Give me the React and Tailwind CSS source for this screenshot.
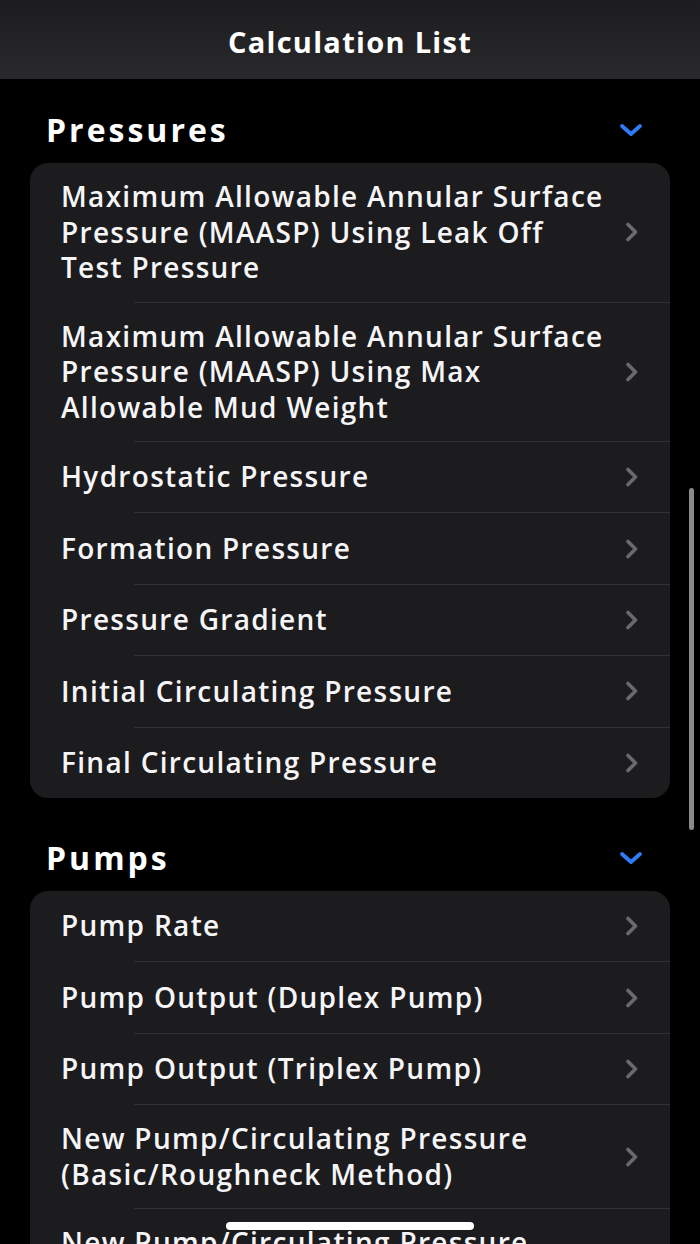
import { Fragment } from "react";

const SECTIONS = [
  {
    title: "Pressures",
    items: [
      "Maximum Allowable Annular Surface Pressure (MAASP) Using Leak Off Test Pressure",
      "Maximum Allowable Annular Surface Pressure (MAASP) Using Max Allowable Mud Weight",
      "Hydrostatic Pressure",
      "Formation Pressure",
      "Pressure Gradient",
      "Initial Circulating Pressure",
      "Final Circulating Pressure",
    ],
  },
  {
    title: "Pumps",
    items: [
      "Pump Rate",
      "Pump Output (Duplex Pump)",
      "Pump Output (Triplex Pump)",
      "New Pump/Circulating Pressure (Basic/Roughneck Method)",
      "New Pump/Circulating Pressure (Advanced Method)",
    ],
  },
];

const appFont = { fontFamily: '"Open Sans", "Liberation Sans", sans-serif' };

function ChevronRight() {
  return (
    <svg width="16" height="20" viewBox="0 0 16 20" className="shrink-0">
      <path
        d="M4 2.5 L11.5 10 L4 17.5"
        fill="none"
        stroke="#6a6a6e"
        strokeWidth="3.6"
        strokeLinecap="round"
        strokeLinejoin="round"
      />
    </svg>
  );
}

function ChevronDown() {
  return (
    <svg width="26" height="16" viewBox="0 0 26 16">
      <path
        d="M4 4 L13 12 L22 4"
        fill="none"
        stroke="#2f7cf6"
        strokeWidth="3.8"
        strokeLinecap="round"
        strokeLinejoin="round"
      />
    </svg>
  );
}

function CalcRow({ label }) {
  return (
    <div className="flex min-h-[70.4px] items-center py-4 pl-[31px] pr-[30px]">
      <span className="flex-1 pr-4 text-[28px] font-semibold leading-[35.5px] tracking-[1.3px] text-[#f5f5f7]">
        {label}
      </span>
      <ChevronRight />
    </div>
  );
}

function Section({ title, items }) {
  return (
    <section>
      <div className="flex h-10 items-center justify-between pl-[46px] pr-[56px]">
        <h2 className="text-[32px] font-bold tracking-[3px] text-white">
          {title}
        </h2>
        <ChevronDown />
      </div>
      <div className="mx-[30px] mt-[13px] overflow-hidden rounded-[18px] bg-[#1c1c1e]">
        {items.map((label, i) => (
          <Fragment key={label}>
            {i > 0 && <div className="ml-[104px] h-px bg-[#323234]" />}
            <CalcRow label={label} />
          </Fragment>
        ))}
      </div>
    </section>
  );
}

export default function App() {
  return (
    <div
      className="relative h-[1244px] w-[700px] overflow-hidden bg-black"
      style={appFont}
    >
      <header className="flex h-[79px] items-center justify-center bg-gradient-to-b from-[#1d1d1f] to-[#29292b]">
        <h1 className="pt-1 text-[29px] font-bold tracking-[1.3px] text-white">
          Calculation List
        </h1>
      </header>

      <div className="flex flex-col gap-10 pt-[31px]">
        {SECTIONS.map((s) => (
          <Section key={s.title} title={s.title} items={s.items} />
        ))}
      </div>

      <div className="absolute right-[6px] top-[488px] h-[342px] w-[5px] rounded-full bg-[#8a8a8c]" />
      <div className="absolute bottom-[14px] left-[226px] h-[8px] w-[248px] rounded-full bg-white" />
    </div>
  );
}
